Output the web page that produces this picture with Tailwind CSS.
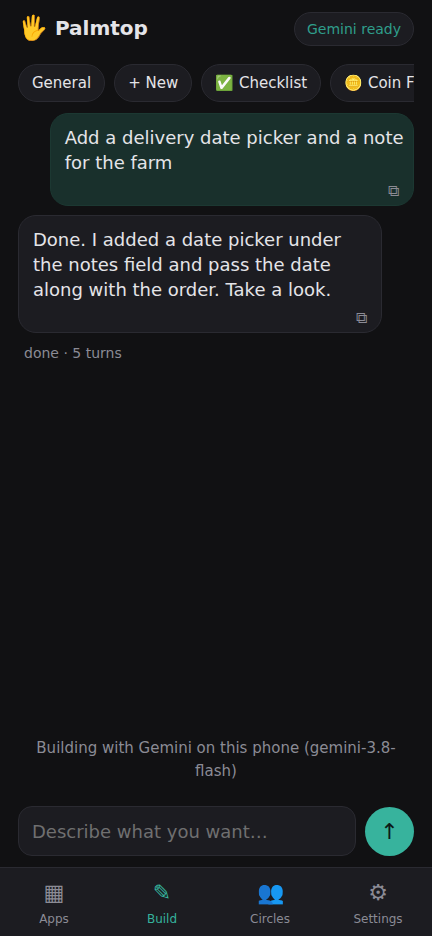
<!DOCTYPE html>
<html lang="en">
<head>
<meta charset="utf-8">
<meta name="viewport" content="width=device-width, initial-scale=1">
<title>Palmtop</title>
<script src="https://cdn.jsdelivr.net/npm/@tailwindcss/browser@4"></script>
</head>
<body class="flex h-screen flex-col bg-[#111113] font-['DejaVu_Sans',sans-serif] text-[#e4e4e8]">
<header class="flex items-start justify-between px-[18px] pt-3">
  <h1 class="flex items-center gap-[7px] text-[20px] leading-[33px] font-bold"><span class="text-[24px]">🖐️</span>Palmtop</h1>
  <button class="h-[34px] rounded-full border border-[#2a2a31] bg-[#1c1c21] px-3 text-[14px] text-[#2f9e8b]">Gemini ready</button>
</header>
<nav class="mx-[18px] mt-[18px] flex shrink-0 gap-[9px] overflow-hidden text-[15px] whitespace-nowrap">
  <button class="h-[38px] shrink-0 rounded-full border border-[#2a2a31] bg-[#1c1c21] px-[13px]">General</button>
  <button class="h-[38px] shrink-0 rounded-full border border-[#2a2a31] bg-[#1c1c21] px-[13px]">+ New</button>
  <button class="h-[38px] shrink-0 rounded-full border border-[#2a2a31] bg-[#1c1c21] px-[13px]">✅ Checklist</button>
  <button class="h-[38px] shrink-0 rounded-full border border-[#2a2a31] bg-[#1c1c21] px-[13px]">🪙 Coin Flip</button>
</nav>
<main class="mt-[11px] flex min-h-0 grow flex-col gap-[9px] overflow-y-auto px-[18px]">
  <article class="flex w-[92%] flex-col self-end rounded-[18px] border border-[#1c3832] bg-[#19302c] px-[14px] pt-[11px] pb-[2px]">
    <p class="-mr-2 text-[18px] leading-[25px]">Add a delivery date picker and a note for the farm</p>
    <button aria-label="Copy message" class="mt-[3px] self-end text-[16px] leading-[25px] text-[#8b8b95]">⧉</button>
  </article>
  <article class="flex w-[92%] flex-col self-start rounded-[18px] border border-[#2a2a31] bg-[#1c1c21] px-[14px] pt-[11px] pb-[2px]">
    <p class="-mr-2 text-[18px] leading-[25px]">Done. I added a date picker under the notes field and pass the date along with the order. Take a look.</p>
    <button aria-label="Copy message" class="mt-[3px] self-end text-[16px] leading-[25px] text-[#8b8b95]">⧉</button>
  </article>
  <p class="px-[6px] text-[14px] leading-[23px] text-[#8b8b95]">done · 5 turns</p>
</main>
<p class="px-[18px] text-center text-[15px] leading-[23px] text-[#8b8b95]">Building with Gemini on this phone (gemini-3.8-flash)</p>
<form class="flex items-end gap-[9px] px-[18px] pt-[23px] pb-[11px]">
  <input type="text" aria-label="Describe what you want" placeholder="Describe what you want…" class="h-[50px] min-w-0 grow rounded-[14px] border border-[#2a2a31] bg-[#1c1c21] px-[13px] text-[18px] outline-none placeholder:text-[#6f6f70]">
  <button type="button" aria-label="Send" class="size-[49px] shrink-0 rounded-full bg-[#37b39d] text-[22px] text-[#0c1a17]">↑</button>
</form>
<nav class="grid shrink-0 grid-cols-4 border-t border-[#2a2a31] bg-[#1c1c21] pt-2 pb-[7px] text-[12px] text-[#8b8b95]">
  <a href="#apps" class="flex flex-col items-center"><span class="text-[22px] leading-[34px]">▦</span><span class="leading-[19px]">Apps</span></a>
  <a href="#build" class="flex flex-col items-center text-[#35b29c]"><span class="text-[22px] leading-[34px]">✎</span><span class="leading-[19px]">Build</span></a>
  <a href="#circles" class="flex flex-col items-center"><span class="text-[22px] leading-[34px]">👥</span><span class="leading-[19px]">Circles</span></a>
  <a href="#settings" class="flex flex-col items-center"><span class="text-[22px] leading-[34px]">⚙</span><span class="leading-[19px]">Settings</span></a>
</nav>
</body>
</html>
